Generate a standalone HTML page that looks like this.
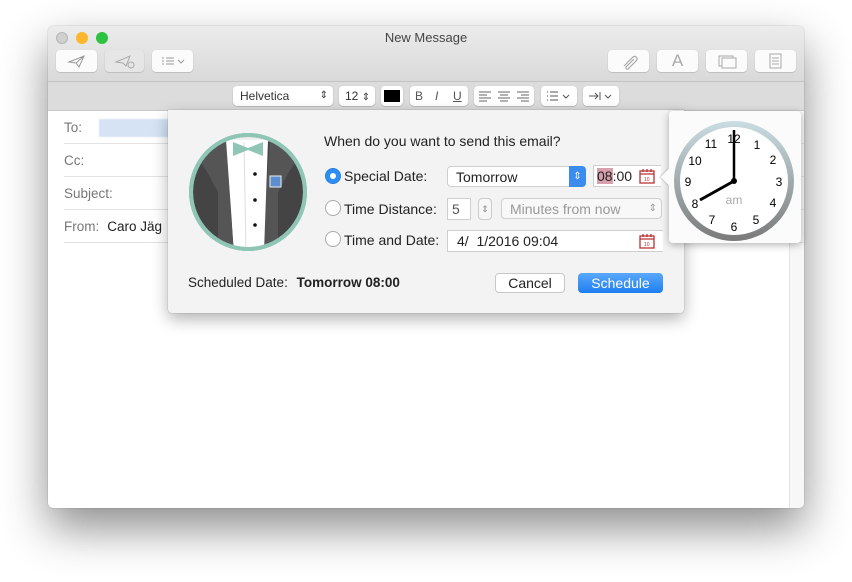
<!DOCTYPE html>
<html><head><meta charset="utf-8"><style>
*{box-sizing:border-box;margin:0;padding:0}
body{width:852px;height:582px;background:#fff;font-family:"Liberation Sans",sans-serif;position:relative;overflow:hidden;font-size:13px;color:#222}
.abs{position:absolute}
.win{left:48px;top:26px;width:756px;height:482px;border-radius:5px;background:#fff;box-shadow:0 20px 45px rgba(0,0,0,.45),0 0 1px rgba(0,0,0,.4);overflow:hidden}
.top{left:0;top:0;width:756px;height:56px;background:linear-gradient(#ececec,#d9d9d9);border-bottom:1px solid #c4c4c4}
.fmt{left:0;top:56px;width:756px;height:29px;background:#dcdcdc;border-bottom:1px solid #c8c8c8}
.btn{background:#fbfbfb;border-radius:4px;box-shadow:0 0.5px 1px rgba(0,0,0,.25)}
.tl{width:12px;height:12px;border-radius:50%;top:6px}
.fb{top:4px;height:20px;background:#fff;border-radius:4px;box-shadow:0 .5px 1px rgba(0,0,0,.3);font-size:12px;color:#333;line-height:20px}
.row{left:16px;width:740px;border-bottom:1px solid #e3e3e3;height:33px;line-height:33px;color:#777;font-size:13.5px}
.dlg{left:168px;top:110px;width:516px;height:203px;background:#f3f3f3;box-shadow:0 6px 16px rgba(0,0,0,.3),0 0 1px rgba(0,0,0,.4);border-radius:0 0 4px 4px}
.lbl{font-size:14px;color:#222}
.radio{width:16px;height:16px;border-radius:50%;background:#fff;border:1px solid #aaa}
.field{background:#fff;border:1px solid #cfcfcf;font-size:14px;line-height:20px;padding-left:8px}
</style></head><body>
<div class="abs win">
 <div class="abs top">
  <div class="abs tl" style="left:8px;background:#d0d0d0;border:1px solid #b5b5b5"></div>
  <div class="abs tl" style="left:28px;background:#fcb72d"></div>
  <div class="abs tl" style="left:48px;background:#2bc33f"></div>
  <div class="abs" style="left:0;width:756px;top:4px;text-align:center;font-size:13px;color:#444">New Message</div>
  <div class="abs btn" style="left:8px;top:24px;width:41px;height:22px"><svg width="41" height="22"><path d="M13 12 L28 6 L23 17 L20 13 Z M20 13 L28 6" fill="none" stroke="#999" stroke-width="1"/></svg></div>
  <div class="abs btn" style="left:57px;top:24px;width:39px;height:22px;background:#e6e6e6"><svg width="39" height="22"><path d="M11 12 L25 6 L21 16 L18 13 Z" fill="none" stroke="#aaa"/><circle cx="26" cy="15" r="3" fill="none" stroke="#aaa"/></svg></div>
  <div class="abs btn" style="left:104px;top:24px;width:41px;height:22px"><svg width="41" height="22"><path d="M10 8h2M14 8h8M10 11h2M14 11h8M10 14h2M14 14h8" stroke="#999"/><path d="M26 10l3 3 3-3" fill="none" stroke="#999"/></svg></div>
  <div class="abs btn" style="left:560px;top:24px;width:41px;height:22px"><svg width="41" height="22"><path d="M16 16 L25 7 a2.5 2.5 0 0 1 3.5 3.5 L20 19 a1.5 1.5 0 0 1 -2 -2 L26 9" fill="none" stroke="#aaa" stroke-width="1.2"/></svg></div>
  <div class="abs btn" style="left:609px;top:24px;width:41px;height:22px;text-align:center;font-size:17px;line-height:22px;color:#aaa">A</div>
  <div class="abs btn" style="left:658px;top:24px;width:41px;height:22px"><svg width="41" height="22"><rect x="13" y="6" width="14" height="10" fill="none" stroke="#aaa"/><rect x="16" y="8" width="14" height="10" fill="#fbfbfb" stroke="#aaa"/></svg></div>
  <div class="abs btn" style="left:707px;top:24px;width:41px;height:22px"><svg width="41" height="22"><rect x="15" y="4" width="11" height="14" fill="none" stroke="#aaa"/><path d="M17 8h7M17 11h7M17 14h7" stroke="#aaa"/></svg></div>
 </div>
 <div class="abs fmt">
  <div class="abs fb" style="left:185px;width:100px;padding-left:7px">Helvetica<span style="position:absolute;right:5px;font-size:10px">⇕</span></div>
  <div class="abs fb" style="left:291px;width:36px;padding-left:6px">12 <span style="font-size:10px">⇕</span></div>
  <div class="abs fb" style="left:333px;width:22px"><div class="abs" style="left:3px;top:4px;width:16px;height:12px;background:#000"></div></div>
  <div class="abs fb" style="left:362px;width:58px;font-size:12px;color:#555"><span class="abs" style="left:5px">B</span><span class="abs" style="left:25px;font-style:italic">I</span><span class="abs" style="left:43px;text-decoration:underline">U</span></div>
  <div class="abs fb" style="left:426px;width:60px"><svg width="60" height="20"><path d="M5 6h12M5 9h8M5 12h12M5 15h8M24 6h12M26 9h8M24 12h12M26 15h8M43 6h12M47 9h8M43 12h12M47 15h8" stroke="#666"/></svg></div>
  <div class="abs fb" style="left:493px;width:36px"><svg width="36" height="20"><path d="M6 6h1M9 6h8M6 10h1M9 10h8M6 14h1M9 14h8M22 9l3 3 3-3" stroke="#555" fill="none"/></svg></div>
  <div class="abs fb" style="left:535px;width:36px"><svg width="36" height="20"><path d="M6 10h9M12 7l3 3-3 3M17 6v8M22 9l3 3 3-3" stroke="#555" fill="none"/></svg></div>
 </div>
 <div class="abs" style="left:741px;top:86px;width:15px;height:396px;background:#f7f7f7;border-left:1px solid #e4e4e4"></div>
 <div class="abs row" style="top:85px">To:<span class="abs" style="left:35px;top:8px;width:90px;height:18px;background:#d5e3f5;filter:blur(.5px)"></span></div>
 <div class="abs row" style="top:118px">Cc:</div>
 <div class="abs row" style="top:151px">Subject:</div>
 <div class="abs row" style="top:184px">From:<span style="color:#222;margin-left:8px">Caro Jäg</span></div>
</div>

<div class="abs dlg">
 <svg class="abs" style="left:20px;top:22px" width="120" height="120" viewBox="0 0 120 120">
  <defs><clipPath id="c"><circle cx="60" cy="60" r="55"/></clipPath></defs>
  <circle cx="60" cy="60" r="59" fill="#8fc5b5"/>
  <g clip-path="url(#c)">
   <rect x="0" y="0" width="120" height="120" fill="#efefef"/>
   <path d="M4 26 L30 12 L44 8 L44 120 L4 120 Z" fill="#444"/>
   <path d="M116 26 L90 12 L76 8 L76 120 L116 120 Z" fill="#444"/>
   <path d="M6 20 L38 6 L46 120 L30 120 L30 60 L18 38 Z" fill="#555"/>
   <path d="M114 20 L82 6 L74 120 L90 120 L90 60 L102 38 Z" fill="#555"/>
   <path d="M38 8 L80 8 L76 120 L46 120 Z" fill="#fff"/>
   <path d="M56 10 L58 120" stroke="#ddd" stroke-width="1"/>
   <path d="M45 10 L60 16 L75 10 L75 24 L60 18 L45 24 Z" fill="#8fc5b5"/>
   <circle cx="67" cy="42" r="1.8" fill="#111"/><circle cx="67" cy="68" r="1.8" fill="#111"/><circle cx="67" cy="93" r="1.8" fill="#111"/>
   <rect x="82" y="44" width="11" height="11" fill="#5b8fd0" stroke="#eee"/>
  </g>
  <circle cx="60" cy="60" r="57" fill="none" stroke="#8fc5b5" stroke-width="4"/>
 </svg>
 <div class="abs lbl" style="left:156px;top:23px">When do you want to send this email?</div>
 <div class="abs radio" style="left:157px;top:58px;background:#2b8ef5;border-color:#2b7fe0"><div class="abs" style="left:4px;top:4px;width:6px;height:6px;border-radius:50%;background:#fff"></div></div>
 <div class="abs lbl" style="left:176px;top:58px">Special Date:</div>
 <div class="abs radio" style="left:157px;top:90px"></div>
 <div class="abs lbl" style="left:176px;top:91px">Time Distance:</div>
 <div class="abs radio" style="left:157px;top:121px"></div>
 <div class="abs lbl" style="left:176px;top:122px">Time and Date:</div>
 <div class="abs field" style="left:279px;top:56px;width:139px;height:21px;border-radius:4px;line-height:20px">Tomorrow<div class="abs" style="right:-1px;top:-1px;width:17px;height:21px;background:#3a8cf0;border-radius:0 4px 4px 0;color:#fff;font-size:10px;text-align:center;line-height:21px">⇕</div></div>
 <div class="abs field" style="left:425px;top:55px;width:68px;height:22px;padding-left:3px;border-right:none">
  <span style="background:#d6a1ad">08</span>:00
  <svg class="abs" style="left:45px;top:2px" width="16" height="16"><rect x="1" y="3" width="14" height="12" fill="none" stroke="#b33" stroke-width="1.3"/><path d="M1 6h14M4 1v3M8 1v3M12 1v3" stroke="#b33" stroke-width="1.3"/><text x="5" y="13" font-size="5" fill="#b33" font-family="Liberation Sans">10</text></svg>
 </div>
 <div class="abs field" style="left:279px;top:88px;width:24px;height:22px;padding-left:4px;color:#555">5</div>
 <div class="abs" style="left:310px;top:88px;width:14px;height:22px;border:1px solid #ccc;border-radius:4px;background:#f7f7f7;font-size:9px;color:#888;text-align:center;line-height:20px">⇕</div>
 <div class="abs field" style="left:333px;top:88px;width:161px;height:21px;border-radius:4px;color:#999;background:#f8f8f8">Minutes from now<span class="abs" style="right:4px;font-size:10px">⇕</span></div>
 <div class="abs field" style="left:279px;top:120px;width:216px;height:22px;padding-left:9px;border-right:none">4/&nbsp; 1/2016 09:04
  <svg class="abs" style="left:191px;top:2px" width="16" height="16"><rect x="1" y="3" width="14" height="12" fill="none" stroke="#b33" stroke-width="1.3"/><path d="M1 6h14M4 1v3M8 1v3M12 1v3" stroke="#b33" stroke-width="1.3"/><text x="5" y="13" font-size="5" fill="#b33" font-family="Liberation Sans">10</text></svg>
 </div>
 <div class="abs" style="left:20px;top:165px;font-size:13.5px">Scheduled Date: <b style="margin-left:5px">Tomorrow 08:00</b></div>
 <div class="abs" style="left:327px;top:163px;width:70px;height:20px;background:#fff;border:1px solid #c8c8c8;border-radius:4px;text-align:center;line-height:18px;font-size:14px">Cancel</div>
 <div class="abs" style="left:410px;top:163px;width:85px;height:20px;background:linear-gradient(#5aa8fb,#1d7ef0);border-radius:4px;text-align:center;line-height:20px;font-size:14px;color:#fff">Schedule</div>
</div>

<div class="abs" style="left:669px;top:111px;width:132px;height:132px;background:#fbfbfb;border-radius:4px;box-shadow:0 2px 8px rgba(0,0,0,.3)"></div>
<div class="abs" style="left:663px;top:171px;width:12px;height:12px;background:#fbfbfb;transform:rotate(45deg);box-shadow:-1px 1px 1px rgba(0,0,0,.15)"></div>
<svg class="abs" style="left:674px;top:121px" width="120" height="120" viewBox="0 0 120 120" font-family="Liberation Sans" font-size="12" text-anchor="middle">
 <defs><linearGradient id="g" x1="0" y1="0" x2="0" y2="1"><stop offset="0" stop-color="#c9dde2"/><stop offset="1" stop-color="#7a7a7a"/></linearGradient></defs>
 <circle cx="60" cy="60" r="60" fill="url(#g)"/>
 <circle cx="60" cy="60" r="54" fill="#fff"/>
 <text x="60" y="22">12</text><text x="83" y="28">1</text><text x="99" y="43">2</text><text x="105" y="65">3</text><text x="99" y="86">4</text><text x="82" y="103">5</text><text x="60" y="110">6</text><text x="38" y="103">7</text><text x="21" y="87">8</text><text x="14" y="65">9</text><text x="21" y="44">10</text><text x="37" y="27">11</text>
 <text x="60" y="83" font-size="12" fill="#aaa">am</text>
 <path d="M60 60 L60 9" stroke="#000" stroke-width="2.5"/>
 <path d="M60 60 L26 79" stroke="#000" stroke-width="3"/>
 <circle cx="60" cy="60" r="3" fill="#000"/>
</svg>
</body></html>
